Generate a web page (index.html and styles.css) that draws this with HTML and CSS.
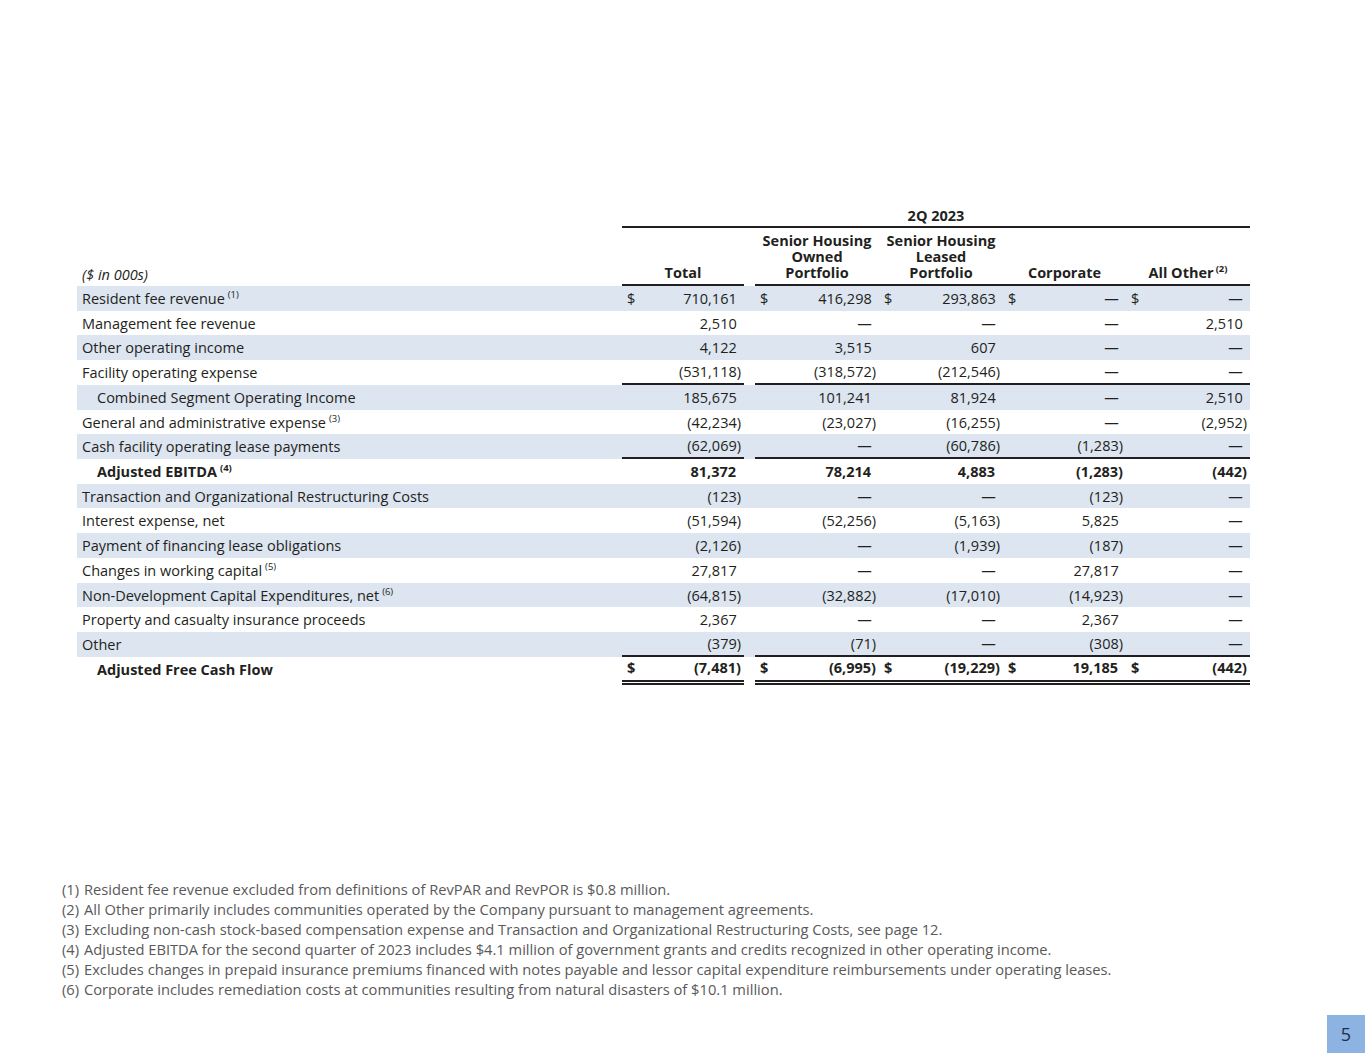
FILE: index.html
```html
<!DOCTYPE html>
<html lang="en">
<head>
<meta charset="utf-8">
<title>2Q 2023 Segment Results</title>
<link rel="stylesheet" href="styles.css">
</head>
<body>
<div class="page">
  <div class="fin">
    <div class="row h1">
      <div class="lab"></div>
      <div class="period">2Q 2023</div>
    </div>
    <div class="row h2">
      <div class="hl it">($ in 000s)</div>
      <div class="hc c"><span>Total</span></div>
      <div class="gap"></div>
      <div class="hc c"><span>Senior Housing<br>Owned<br>Portfolio</span></div>
      <div class="hc c"><span>Senior Housing<br>Leased<br>Portfolio</span></div>
      <div class="hc c"><span>Corporate</span></div>
      <div class="hc c"><span>All Other<sup class="sup">(2)</sup></span></div>
    </div>

    <div class="row sh">
      <div class="lab">Resident fee revenue<sup class="sup">(1)</sup></div>
      <div class="c m"><span class="cur">$</span><span class="v p">710,161</span></div>
      <div class="gap"></div>
      <div class="c m"><span class="cur">$</span><span class="v p">416,298</span></div>
      <div class="c m"><span class="cur">$</span><span class="v p">293,863</span></div>
      <div class="c m"><span class="cur">$</span><span class="v p">—</span></div>
      <div class="c m"><span class="cur">$</span><span class="v p">—</span></div>
    </div>
    <div class="row">
      <div class="lab">Management fee revenue</div>
      <div class="c m"><span class="v p">2,510</span></div>
      <div class="gap"></div>
      <div class="c m"><span class="v p">—</span></div>
      <div class="c m"><span class="v p">—</span></div>
      <div class="c m"><span class="v p">—</span></div>
      <div class="c m"><span class="v p">2,510</span></div>
    </div>
    <div class="row sh">
      <div class="lab">Other operating income</div>
      <div class="c m"><span class="v p">4,122</span></div>
      <div class="gap"></div>
      <div class="c m"><span class="v p">3,515</span></div>
      <div class="c m"><span class="v p">607</span></div>
      <div class="c m"><span class="v p">—</span></div>
      <div class="c m"><span class="v p">—</span></div>
    </div>
    <div class="row ul">
      <div class="lab">Facility operating expense</div>
      <div class="c m"><span class="v">(531,118)</span></div>
      <div class="gap"></div>
      <div class="c m"><span class="v">(318,572)</span></div>
      <div class="c m"><span class="v">(212,546)</span></div>
      <div class="c m"><span class="v p">—</span></div>
      <div class="c m"><span class="v p">—</span></div>
    </div>
    <div class="row sh">
      <div class="lab ind">Combined Segment Operating Income</div>
      <div class="c m"><span class="v p">185,675</span></div>
      <div class="gap"></div>
      <div class="c m"><span class="v p">101,241</span></div>
      <div class="c m"><span class="v p">81,924</span></div>
      <div class="c m"><span class="v p">—</span></div>
      <div class="c m"><span class="v p">2,510</span></div>
    </div>
    <div class="row">
      <div class="lab">General and administrative expense<sup class="sup">(3)</sup></div>
      <div class="c m"><span class="v">(42,234)</span></div>
      <div class="gap"></div>
      <div class="c m"><span class="v">(23,027)</span></div>
      <div class="c m"><span class="v">(16,255)</span></div>
      <div class="c m"><span class="v p">—</span></div>
      <div class="c m"><span class="v">(2,952)</span></div>
    </div>
    <div class="row sh ul">
      <div class="lab">Cash facility operating lease payments</div>
      <div class="c m"><span class="v">(62,069)</span></div>
      <div class="gap"></div>
      <div class="c m"><span class="v p">—</span></div>
      <div class="c m"><span class="v">(60,786)</span></div>
      <div class="c m"><span class="v">(1,283)</span></div>
      <div class="c m"><span class="v p">—</span></div>
    </div>
    <div class="row b">
      <div class="lab ind">Adjusted EBITDA<sup class="sup">(4)</sup></div>
      <div class="c m"><span class="v p">81,372</span></div>
      <div class="gap"></div>
      <div class="c m"><span class="v p">78,214</span></div>
      <div class="c m"><span class="v p">4,883</span></div>
      <div class="c m"><span class="v">(1,283)</span></div>
      <div class="c m"><span class="v">(442)</span></div>
    </div>
    <div class="row sh">
      <div class="lab">Transaction and Organizational Restructuring Costs</div>
      <div class="c m"><span class="v">(123)</span></div>
      <div class="gap"></div>
      <div class="c m"><span class="v p">—</span></div>
      <div class="c m"><span class="v p">—</span></div>
      <div class="c m"><span class="v">(123)</span></div>
      <div class="c m"><span class="v p">—</span></div>
    </div>
    <div class="row">
      <div class="lab">Interest expense, net</div>
      <div class="c m"><span class="v">(51,594)</span></div>
      <div class="gap"></div>
      <div class="c m"><span class="v">(52,256)</span></div>
      <div class="c m"><span class="v">(5,163)</span></div>
      <div class="c m"><span class="v p">5,825</span></div>
      <div class="c m"><span class="v p">—</span></div>
    </div>
    <div class="row sh">
      <div class="lab">Payment of financing lease obligations</div>
      <div class="c m"><span class="v">(2,126)</span></div>
      <div class="gap"></div>
      <div class="c m"><span class="v p">—</span></div>
      <div class="c m"><span class="v">(1,939)</span></div>
      <div class="c m"><span class="v">(187)</span></div>
      <div class="c m"><span class="v p">—</span></div>
    </div>
    <div class="row">
      <div class="lab">Changes in working capital<sup class="sup">(5)</sup></div>
      <div class="c m"><span class="v p">27,817</span></div>
      <div class="gap"></div>
      <div class="c m"><span class="v p">—</span></div>
      <div class="c m"><span class="v p">—</span></div>
      <div class="c m"><span class="v p">27,817</span></div>
      <div class="c m"><span class="v p">—</span></div>
    </div>
    <div class="row sh">
      <div class="lab">Non-Development Capital Expenditures, net<sup class="sup">(6)</sup></div>
      <div class="c m"><span class="v">(64,815)</span></div>
      <div class="gap"></div>
      <div class="c m"><span class="v">(32,882)</span></div>
      <div class="c m"><span class="v">(17,010)</span></div>
      <div class="c m"><span class="v">(14,923)</span></div>
      <div class="c m"><span class="v p">—</span></div>
    </div>
    <div class="row">
      <div class="lab">Property and casualty insurance proceeds</div>
      <div class="c m"><span class="v p">2,367</span></div>
      <div class="gap"></div>
      <div class="c m"><span class="v p">—</span></div>
      <div class="c m"><span class="v p">—</span></div>
      <div class="c m"><span class="v p">2,367</span></div>
      <div class="c m"><span class="v p">—</span></div>
    </div>
    <div class="row sh ul">
      <div class="lab">Other</div>
      <div class="c m"><span class="v">(379)</span></div>
      <div class="gap"></div>
      <div class="c m"><span class="v">(71)</span></div>
      <div class="c m"><span class="v p">—</span></div>
      <div class="c m"><span class="v">(308)</span></div>
      <div class="c m"><span class="v p">—</span></div>
    </div>
    <div class="row b dbl">
      <div class="lab ind">Adjusted Free Cash Flow</div>
      <div class="c m"><span class="cur">$</span><span class="v">(7,481)</span></div>
      <div class="gap"></div>
      <div class="c m"><span class="cur">$</span><span class="v">(6,995)</span></div>
      <div class="c m"><span class="cur">$</span><span class="v">(19,229)</span></div>
      <div class="c m"><span class="cur">$</span><span class="v p">19,185</span></div>
      <div class="c m"><span class="cur">$</span><span class="v">(442)</span></div>
    </div>
  </div>

  <div class="notes">
    <div class="note"><span class="nn">(1)</span>Resident fee revenue excluded from definitions of RevPAR and RevPOR is $0.8 million.</div>
    <div class="note"><span class="nn">(2)</span>All Other primarily includes communities operated by the Company pursuant to management agreements.</div>
    <div class="note"><span class="nn">(3)</span>Excluding non-cash stock-based compensation expense and Transaction and Organizational Restructuring Costs, see page 12.</div>
    <div class="note"><span class="nn">(4)</span>Adjusted EBITDA for the second quarter of 2023 includes $4.1 million of government grants and credits recognized in other operating income.</div>
    <div class="note"><span class="nn">(5)</span>Excludes changes in prepaid insurance premiums financed with notes payable and lessor capital expenditure reimbursements under operating leases.</div>
    <div class="note"><span class="nn">(6)</span>Corporate includes remediation costs at communities resulting from natural disasters of $10.1 million.</div>
  </div>

  <div class="foot">
    <div class="pg">5</div>
  </div>
</div>
</body>
</html>
```

FILE: styles.css
```css
* { box-sizing: border-box; }
html, body { margin: 0; padding: 0; background: #ffffff; }
.page {
  width: 1365px;
  height: 1053px;
  display: flex;
  flex-direction: column;
  font-family: "Open Sans", "Noto Sans", sans-serif;
  color: #231f20;
}
.fin {
  margin: 204px 0 0 77px;
  width: 1173px;
  font-size: 14.5px;
}
.row {
  display: grid;
  grid-template-columns: 545px 122px 11px 124px 124px 123px 124px;
  height: 24.73px;
}
.row > div {
  white-space: nowrap;
}
.sh { background: #dce5f0; }
.lab {
  padding-left: 5px;
  padding-top: 1px;
  line-height: 24px;
}
.lab.ind { padding-left: 20px; }
.it { font-style: italic; }
.b { font-weight: 700; }
.sup {
  font-size: 9.5px;
  line-height: 0;
  vertical-align: 6px;
  margin-left: 3px;
  font-weight: 400;
}
.b .sup { font-weight: 700; }
.m {
  display: flex;
  align-items: center;
  justify-content: flex-end;
  padding: 0 3px 0 5px;
}
.cur { margin-right: auto; }
.v.p::after { content: ")"; visibility: hidden; }

.ul > .c { border-bottom: 2px solid #231f20; }

.h1 { height: 24px; }
.period {
  grid-column: 2 / 8;
  display: flex;
  align-items: center;
  justify-content: center;
  font-weight: 700;
  border-bottom: 2px solid #231f20;
}
.h2 { height: 58px; }
.h2 > div {
  display: flex;
  align-items: flex-end;
  padding-bottom: 3px;
  line-height: 16px;
}
.hl { padding-left: 5px; }
.hc {
  justify-content: center;
  text-align: center;
  font-weight: 700;
  border-bottom: 2px solid #231f20;
}
.hc .sup { font-weight: 700; vertical-align: 6px; margin-left: 2px; }

.dbl { height: 28px; }
.dbl > .c { border-bottom: 5px double #231f20; padding-bottom: 1px; }

.notes {
  margin-top: 194px;
  padding-left: 62px;
  font-size: 14.7px;
  line-height: 20px;
  color: #595959;
}
.note { white-space: nowrap; }
.nn { display: inline-block; width: 22px; }

.foot {
  margin-top: auto;
  display: flex;
  justify-content: flex-end;
}
.pg {
  width: 38px;
  height: 38px;
  background: #8db3e2;
  color: #1f2d4a;
  font-size: 18px;
  display: flex;
  align-items: center;
  justify-content: center;
}
```
